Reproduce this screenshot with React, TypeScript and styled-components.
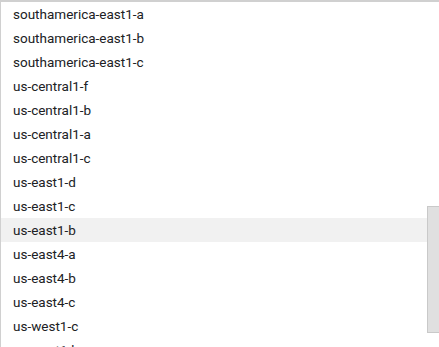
import React from "react";
import styled, { createGlobalStyle } from "styled-components";

const Global = createGlobalStyle`
  html, body { margin: 0; padding: 0; background: #fff; overflow: hidden; }
  body { font-family: Roboto, "Liberation Sans", Arial, sans-serif; }
`;

const Panel = styled.div`
  position: relative;
  width: 439px;
  height: 347px;
  box-sizing: border-box;
  border-top: 2px solid #d0d0d0;
  border-left: 1px solid #d0d0d0;
  overflow: hidden;
  background: #fff;
`;

const List = styled.ul`
  list-style: none;
  margin: 0;
  padding: 0;
  display: flex;
  flex-direction: column;
`;

const Item = styled.li<{ $active?: boolean }>`
  height: 24px;
  display: flex;
  align-items: center;
  padding-left: 12px;
  font-size: 13.5px;
  color: #202124;
  background: ${(p) => (p.$active ? "#f1f1f1" : "transparent")};
  white-space: nowrap;
`;

const Thumb = styled.div`
  position: absolute;
  right: 0;
  top: 204px;
  width: 12px;
  height: 127px;
  box-sizing: border-box;
  background: #e0e0e0;
  border: 1px solid #c9c9c9;
  border-right: none;
`;

const zones = [
  "southamerica-east1-a",
  "southamerica-east1-b",
  "southamerica-east1-c",
  "us-central1-f",
  "us-central1-b",
  "us-central1-a",
  "us-central1-c",
  "us-east1-d",
  "us-east1-c",
  "us-east1-b",
  "us-east4-a",
  "us-east4-b",
  "us-east4-c",
  "us-west1-c",
  "us-west1-b",
];

export default function App() {
  return (
    <>
      <Global />
      <Panel>
        <List>
          {zones.map((z) => (
            <Item key={z} $active={z === "us-east1-b"}>
              {z}
            </Item>
          ))}
        </List>
        <Thumb />
      </Panel>
    </>
  );
}
